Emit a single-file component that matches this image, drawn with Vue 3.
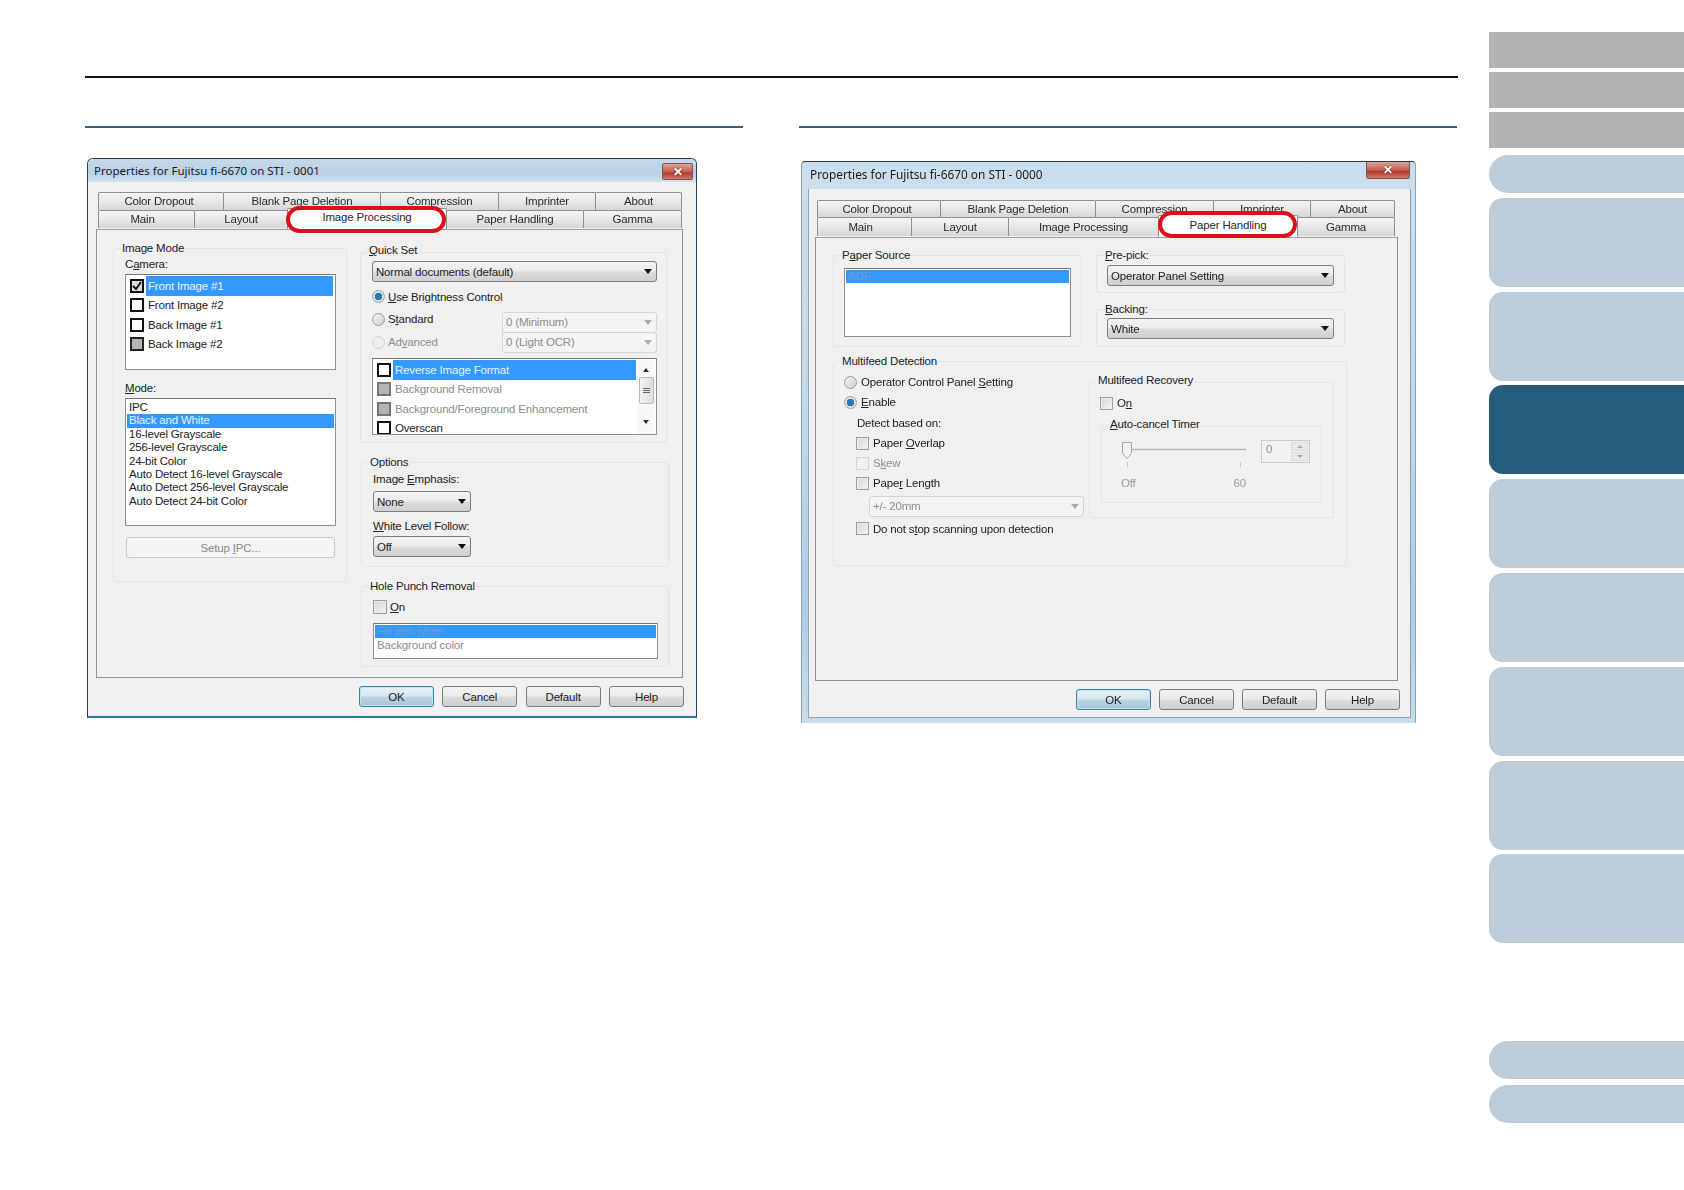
<script setup>
const tabs1a = [['Color Dropout',125],['Blank Page Deletion',157],['Compression',118],['Imprinter',97],['About',86]]
const tabs1b = [['Main',96],['Layout',93],['Image Processing',159,true],['Paper Handling',137],['Gamma',98]]
const tabs2a = [['Color Dropout',123],['Blank Page Deletion',155],['Compression',118],['Imprinter',97],['About',84]]
const tabs2b = [['Main',94],['Layout',97],['Image Processing',150],['Paper Handling',139,true],['Gamma',97]]
const cameras = [['Front Image #1','checked',true],['Front Image #2','',false],['Back Image #1','',false],['Back Image #2','gray',false]]
const modes = ['IPC','Black and White','16-level Grayscale','256-level Grayscale','24-bit Color','Auto Detect 16-level Grayscale','Auto Detect 256-level Grayscale','Auto Detect 24-bit Color']
const options = [['Reverse Image Format','',true,false],['Background Removal','gray',false,true],['Background/Foreground Enhancement','gray',false,true],['Overscan','',false,false]]
const nav = [['gray',36],['gray',36],['gray',36],['pill',38],['blue',89],['blue',89],['active',89],['blue',89],['blue',89],['blue',89],['blue',89],['blue',89],['pill far',38],['pill last',38]]
</script>

<template>
  <div class="page">
    <main class="content">
      <div class="rule"></div>
      <div class="columns">
        <section class="col">
          <div class="section-line"></div>
          <div class="dialog d1">
            <div class="titlebar">
              <span class="title">Properties for Fujitsu fi-6670 on STI - 0001</span>
              <span class="close">✕</span>
            </div>
            <div class="client">
              <div class="tabs">
                <div class="tabrow r1">
                  <div v-for="t in tabs1a" :key="t[0]" class="tab" :style="{ width: t[1] + 1 + 'px' }">{{ t[0] }}</div>
                </div>
                <div class="tabrow r2">
                  <div v-for="t in tabs1b" :key="t[0]" class="tab" :class="{ active: t[2] }" :style="{ width: t[1] + 1 + 'px' }">
                    <span v-if="t[2]" class="ellipse"></span>
                    <span class="tabtext">{{ t[0] }}</span>
                  </div>
                </div>
              </div>
              <div class="panel">
                <div class="split">
                  <div class="group image-mode">
                    <span class="legend">Image Mode</span>
                    <div class="label">C<u>a</u>mera:</div>
                    <div class="listbox camera">
                      <div v-for="c in cameras" :key="c[0]" class="checkrow">
                        <span class="bigcheck" :class="c[1]">
                          <svg v-if="c[1] === 'checked'" viewBox="0 0 10 10" width="10" height="10"><path d="M1 5l3 3 5-7" fill="none" stroke="#111" stroke-width="2"/></svg>
                        </span>
                        <span class="checktext" :class="{ sel: c[2] }">{{ c[0] }}</span>
                      </div>
                    </div>
                    <div class="label mode-label"><u>M</u>ode:</div>
                    <div class="listbox modes">
                      <div v-for="(m, i) in modes" :key="m" class="moderow" :class="{ sel: i === 1 }">{{ m }}</div>
                    </div>
                    <div class="btn disabled setup"><span>Setup <u>I</u>PC...</span></div>
                  </div>
                  <div class="rightcol">
                    <div class="group quick">
                      <span class="legend"><u>Q</u>uick Set</span>
                      <div class="combo wide"><span>Normal documents (default)</span><i class="arrow"></i></div>
                      <div class="quickgrid">
                        <div class="radioline span2"><span class="radio on"></span><span><u>U</u>se Brightness Control</span></div>
                        <div class="radioline std"><span class="radio"></span><span>S<u>t</u>andard</span></div>
                        <div class="combo off"><span>0 (Minimum)</span><i class="arrow"></i></div>
                        <div class="radioline adv dim"><span class="radio faint"></span><span>Ad<u>v</u>anced</span></div>
                        <div class="combo off"><span>0 (Light OCR)</span><i class="arrow"></i></div>
                      </div>
                      <div class="listbox optlist">
                        <div class="optrows">
                          <div v-for="o in options" :key="o[0]" class="checkrow">
                            <span class="bigcheck" :class="o[1]"></span>
                            <span class="checktext" :class="{ sel: o[2], dim: o[3] }">{{ o[0] }}</span>
                          </div>
                        </div>
                        <div class="scroll">
                          <i class="sb-up"></i>
                          <span class="thumb"><b></b><b></b><b></b></span>
                          <i class="sb-down"></i>
                        </div>
                      </div>
                    </div>
                    <div class="group options">
                      <span class="legend">Options</span>
                      <div class="label">Image <u>E</u>mphasis:</div>
                      <div class="combo small first"><span>None</span><i class="arrow"></i></div>
                      <div class="label wl"><u>W</u>hite Level Follow:</div>
                      <div class="combo small"><span>Off</span><i class="arrow"></i></div>
                    </div>
                    <div class="group punch">
                      <span class="legend">Hole Punch Removal</span>
                      <div class="checkline"><span class="check"></span><span><u>O</u>n</span></div>
                      <div class="listbox holes">
                        <div class="moderow sel faded">Fill with white</div>
                        <div class="moderow dim">Background color</div>
                      </div>
                    </div>
                  </div>
                </div>
              </div>
              <div class="footer">
                <div class="btn ok">OK</div>
                <div class="btn">Cancel</div>
                <div class="btn">Default</div>
                <div class="btn">Help</div>
              </div>
            </div>
          </div>
        </section>

        <section class="col">
          <div class="section-line"></div>
          <div class="dialog d2">
            <div class="titlebar">
              <span class="title">Properties for Fujitsu fi-6670 on STI - 0000</span>
              <span class="close">✕</span>
            </div>
            <div class="client">
              <div class="tabs">
                <div class="tabrow r1">
                  <div v-for="t in tabs2a" :key="t[0]" class="tab" :style="{ width: t[1] + 1 + 'px' }">{{ t[0] }}</div>
                </div>
                <div class="tabrow r2">
                  <div v-for="t in tabs2b" :key="t[0]" class="tab" :class="{ active: t[2] }" :style="{ width: t[1] + 1 + 'px' }">
                    <span v-if="t[2]" class="ellipse"></span>
                    <span class="tabtext">{{ t[0] }}</span>
                  </div>
                </div>
              </div>
              <div class="panel">
                <div class="toprow">
                  <div class="group source">
                    <span class="legend">P<u>a</u>per Source</span>
                    <div class="listbox sourcelist"><div class="moderow sel faded">ADF</div></div>
                  </div>
                  <div class="stack">
                    <div class="group picker">
                      <span class="legend"><u>P</u>re-pick:</span>
                      <div class="combo"><span>Operator Panel Setting</span><i class="arrow"></i></div>
                    </div>
                    <div class="group picker backing">
                      <span class="legend"><u>B</u>acking:</span>
                      <div class="combo"><span>White</span><i class="arrow"></i></div>
                    </div>
                  </div>
                </div>
                <div class="group multifeed">
                  <span class="legend">Multifeed Detection</span>
                  <div class="mf-left">
                    <div class="radioline mf"><span class="radio"></span><span>Operator Control Panel <u>S</u>etting</span></div>
                    <div class="radioline mf"><span class="radio on"></span><span><u>E</u>nable</span></div>
                    <div class="detect">Detect based on:</div>
                    <div class="checkline mfc"><span class="check"></span><span>Paper <u>O</u>verlap</span></div>
                    <div class="checkline mfc dim"><span class="check faint"></span><span>S<u>k</u>ew</span></div>
                    <div class="checkline mfc"><span class="check"></span><span>Pape<u>r</u> Length</span></div>
                    <div class="combo off length"><span>+/- 20mm</span><i class="arrow"></i></div>
                    <div class="checkline mfc last"><span class="check"></span><span>Do not s<u>t</u>op scanning upon detection</span></div>
                  </div>
                  <div class="group recovery">
                    <span class="legend">Multifeed Recovery</span>
                    <div class="checkline"><span class="check"></span><span>O<u>n</u></span></div>
                    <div class="group timer">
                      <span class="legend"><u>A</u>uto-cancel Timer</span>
                      <div class="slider">
                        <svg width="125" height="28" viewBox="0 0 125 28">
                          <line x1="6" y1="9.5" x2="125" y2="9.5" stroke="#b5b5b5" stroke-width="1.5"/>
                          <path d="M1.500 2.500h9v11l-4.500 5-4.500-5z" fill="#f2f2f2" stroke="#a5a5a5"/>
                          <line x1="6.500" y1="22" x2="6.500" y2="27" stroke="#c8c8c8"/>
                          <line x1="119.500" y1="22" x2="119.500" y2="27" stroke="#c8c8c8"/>
                        </svg>
                        <div class="ticks"><span>Off</span><span>60</span></div>
                      </div>
                      <div class="spin">
                        <span class="spinval">0</span>
                        <div class="spinbtns"><i class="sp-up"></i><i class="sp-down"></i></div>
                      </div>
                    </div>
                  </div>
                </div>
              </div>
              <div class="footer">
                <div class="btn ok">OK</div>
                <div class="btn">Cancel</div>
                <div class="btn">Default</div>
                <div class="btn">Help</div>
              </div>
            </div>
          </div>
        </section>
      </div>
    </main>
    <nav class="sidebar">
      <div v-for="(n, i) in nav" :key="i" class="navitem" :class="n[0]" :style="{ height: n[1] + 'px' }"></div>
    </nav>
  </div>
</template>

<style scoped>
.page { display: flex; width: 1684px; height: 1190px; background: #fff; overflow: hidden; font-family: "Liberation Sans", Arial, sans-serif; font-size: 11.5px; letter-spacing: -0.18px; line-height: 14px; color: #222; }
.content { width: 1373px; margin-left: 85px; padding-top: 76px; box-sizing: content-box; }
.rule { height: 2px; background: #111; }
.columns { display: flex; gap: 56px; margin-top: 48px; }
.col { width: 658px; }
.section-line { height: 2px; background: #3a6079; }

.sidebar { display: flex; flex-direction: column; width: 195px; margin-left: 31px; padding-top: 32px; }
.navitem { flex: none; margin-top: 4.8px; background: #bccdd9; border-radius: 14px 0 0 14px; }
.navitem.gray { background: #b2b2b2; border-radius: 0; margin-top: 4px; }
.navitem.gray:first-child { margin-top: 0; }
.navitem.pill { border-radius: 19px 0 0 19px; }
.navitem.pill:nth-child(4) { margin-top: 7px; }
.navitem.active { background: #265d7c; }
.navitem.far { margin-top: 97.4px; }
.navitem.last { margin-top: 6px; }

.dialog { box-sizing: border-box; margin-left: 2px; filter: blur(0.35px); background: #f0f0f0; }
.d1 { width: 610px; height: 560px; margin-top: 30px; border: 1px solid #25404f; border-bottom: 2px solid #2a7aa5; border-radius: 6px 6px 0 0; }
.d2 { width: 615px; height: 562px; margin-top: 33px; border-top: 1px solid #2f3c45; border-left: 1px solid #8ba3b5; border-right: 1px solid #8ba3b5; background: linear-gradient(180deg, #cbdeed, #c3d9ea 40%, #aecee5 80%, #c8dbe9); border-radius: 4px 4px 0 0; padding: 0 4px 5px 6px; }

.titlebar { display: flex; justify-content: space-between; align-items: flex-start; }
.d1 .titlebar { height: 23px; padding: 0 3px 0 6px; background: linear-gradient(180deg, #c5d9ea, #b9d1e6 65%, #d0e1ef); border-radius: 5px 5px 0 0; }
.d2 .titlebar { height: 27px; padding: 0 1px 0 2px; }
.title { font-family: "Noto Sans", "Open Sans", sans-serif; font-size: 11.5px; letter-spacing: 0; line-height: 24px; color: #1c1c1c; }
.d2 .title { font-size: 11.85px; line-height: 25px; }
.close { display: flex; align-items: center; justify-content: center; color: #fff; font-weight: bold; font-size: 12px; text-shadow: 0 0 2px #611; background: linear-gradient(180deg, #dca59c, #c75f52 50%, #b03b2e 60%, #cf7a6d); border: 1px solid #7d5550; border-top: 0; border-radius: 0 0 3px 3px; }
.d1 .close { width: 29px; height: 15px; margin-top: 4px; border-top: 1px solid #7d5550; border-radius: 2px; }
.d2 .close { width: 42px; height: 16px; }

.client { background: #f0f0f0; }
.d1 .client { height: 534px; padding-top: 10px; box-sizing: border-box; }
.d2 .client { height: 529px; padding-top: 11px; box-sizing: border-box; border-left: 1px solid #8ba3b5; border-right: 1px solid #8ba3b5; border-bottom: 1px solid #8ba3b5; }

.tabs { position: relative; z-index: 2; margin-left: 10px; }
.d2 .tabs { margin-left: 8px; }
.tabrow { display: flex; }
.tab { display: flex; align-items: center; justify-content: center; box-sizing: border-box; margin-right: -1px; flex: none; height: 18px; color: #2a2a2a; border: 1px solid #8c8f92; border-bottom: 0; border-radius: 2px 2px 0 0; background: linear-gradient(180deg, #f4f4f4, #e9e9e9 45%, #d6d6d6); position: relative; }
.d1 .tab { padding-bottom: 1px; }
.r2 .tab:first-child { padding-right: 8px; }
.r1 .tab:first-child { padding-right: 4px; }
.d2 .r1 .tab { height: 17px; }
.d2 .r2 .tab { height: 19px; }
.d1 .tab.active { height: 21px; margin-top: -2px; background: #fdfdfd; z-index: 3; padding-bottom: 4px; }
.d2 .r2 .tab.active { height: 22px; margin-top: -2px; background: #fdfdfd; z-index: 3; padding-bottom: 4px; }
.tabtext { position: relative; z-index: 2; }
.ellipse { position: absolute; left: -2px; top: -3px; width: 160px; height: 27px; box-sizing: border-box; border: 4px solid #dc101c; border-radius: 14px; background: #fff; z-index: 1; }
.d2 .ellipse { width: 139px; left: -1px; top: -5px; }

.panel { box-sizing: border-box; background: #f0f0f0; border: 1px solid #8c9196; border-top-color: #9a9da0; }
.d1 .panel { margin-left: 8px; width: 587px; height: 449px; padding: 18px 0 0 16px; }
.d2 .panel { margin-left: 6px; width: 583px; height: 444px; padding: 17px 0 0 17px; }

.footer { display: flex; justify-content: flex-end; gap: 8.4px; padding-right: 12px; margin-top: 8px; }
.d2 .footer { gap: 8px; padding-right: 10px; margin-top: 8px; }
.btn { box-sizing: border-box; width: 75px; height: 21px; display: flex; align-items: center; justify-content: center; border: 1px solid #7b7b7b; border-radius: 3px; background: linear-gradient(180deg, #f3f3f3, #ebebeb 48%, #dcdcdc 52%, #cfcfcf); color: #222; }
.btn.ok { border: 1px solid #3a7fae; box-shadow: inset 0 0 0 1px #bfe3f5; background: linear-gradient(180deg, #e6f0f7, #d6e6f1 48%, #bcd2e2 52%, #aac4d8); }
.btn.disabled { border-color: #c9c9c9; background: #f4f4f4; color: #8a8a8a; }

.group { position: relative; box-sizing: border-box; border: 1px solid #e1e3e5; border-radius: 3px; }
.legend { position: absolute; left: 7px; top: -8px; padding: 0 1px; background: #f0f0f0; white-space: nowrap; }
.label { height: 14px; white-space: nowrap; }

.split { display: flex; gap: 14px; }
.image-mode { width: 234px; height: 334px; padding: 8px 0 0 11px; }
.camera { height: 96px; width: 211px; margin-top: 3px; padding: 1px; }
.listbox { box-sizing: border-box; background: #fff; border: 1px solid #8a8f94; border-top-color: #74787c; overflow: hidden; }
.checkrow { display: flex; align-items: center; height: 19.5px; }
.bigcheck { flex: none; box-sizing: border-box; width: 14px; height: 14px; margin-left: 3px; border: 2px solid #111; background: #fff; display: flex; align-items: center; justify-content: center; }
.optlist .bigcheck { margin-left: 4px; }
.bigcheck.gray { background: #b4b4b4; border-color: #777; }
.bigcheck.checked { background: #ddd; }
.camera .bigcheck.gray { border-color: #222; }
.checktext { flex: 1; align-self: stretch; display: flex; align-items: center; padding-left: 2px; margin-left: 2px; margin-right: 1px; white-space: nowrap; }
.sel { background: #3399ff; color: #e8f2ff; }
.dim { color: #8d8d8d; }
.mode-label { margin-top: 11px; }
.modes { width: 211px; height: 128px; margin-top: 3px; padding: 2px 1px; }
.moderow { height: 13.4px; line-height: 13.4px; padding-left: 2px; white-space: nowrap; }
.setup { width: 209px; margin: 11px 0 0 1px; }

.rightcol { width: 308px; display: flex; flex-direction: column; }
.quick { width: 307px; height: 191px; margin: 4px 0 0 -1px; padding: 8px 0 0 11px; }
.quick .legend { top: -10px; }
.combo { display: flex; align-items: center; justify-content: space-between; box-sizing: border-box; height: 21px; padding: 0 4px 0 3px; border: 1px solid #7d7d7d; border-radius: 3px; background: linear-gradient(180deg, #f3f3f3, #ebebeb 48%, #dcdcdc 52%, #cfcfcf); white-space: nowrap; }
.combo.wide { width: 285px; }
.arrow { width: 0; height: 0; border-left: 4px solid transparent; border-right: 4px solid transparent; border-top: 5px solid #111; }
.combo.off { background: #f4f4f4; border-color: #d4d4d4; color: #8d8d8d; height: 20.5px; }
.combo.off .arrow { border-top-color: #a9a9a9; }
.quickgrid { display: grid; grid-template-columns: 130px 155px; grid-template-rows: 25px 20px 21px; margin-top: 5px; }
.span2 { grid-column: 1 / 3; height: 21px; margin: -1px 0 4px; }
.radioline { display: flex; align-items: center; gap: 3px; white-space: nowrap; }
.std { align-self: start; height: 14px; }
.adv { align-self: start; height: 14px; margin-top: 3px; }
.radio { flex: none; box-sizing: border-box; width: 13px; height: 13px; border-radius: 50%; border: 1px solid #9a9a9a; background: linear-gradient(135deg, #f2f2f2, #cfcfcf); }
.radio.on { background: radial-gradient(circle, #1f7fb8 0 3px, #0e5f90 3.4px, #e4e4e4 4px, #d0d0d0); border-color: #8aa; }
.radio.faint { border-color: #d0d0d0; background: #ececec; }
.optlist { display: flex; width: 285px; height: 77px; margin: 5px 0 0; padding-top: 1px; }
.optrows { flex: 1; }
.scroll { flex: none; width: 18px; display: flex; flex-direction: column; align-items: center; background: #f8f8f8; margin-right: 1px; }
.sb-up, .sb-down { width: 0; height: 0; border-left: 3.500px solid transparent; border-right: 3.500px solid transparent; }
.sb-up { border-bottom: 4px solid #333; margin-top: 8px; }
.thumb { box-sizing: border-box; width: 15px; height: 27px; margin-top: 5px; border: 1px solid #b8b8b8; border-radius: 2px; background: linear-gradient(90deg, #f3f3f3, #dcdcdc); display: flex; flex-direction: column; align-items: center; justify-content: center; gap: 1px; }
.thumb b { width: 7px; height: 1px; background: #666; }
.sb-down { border-top: 4px solid #333; margin-top: 16px; }

.options { height: 105px; margin-top: 19px; padding: 9px 0 0 11px; }
.combo.small { width: 98px; margin-top: 3px; }
.combo.first { margin-top: 5px; }
.wl { margin-top: 7px; }
.punch { height: 81px; margin-top: 19px; padding: 13px 0 0 11px; }
.checkline { display: flex; align-items: center; gap: 3px; height: 14px; white-space: nowrap; }
.check { flex: none; box-sizing: border-box; width: 14px; height: 14px; border: 1px solid #9d9d9d; background: linear-gradient(135deg, #d6d6d6, #f3f3f3); box-shadow: inset 0 0 0 1px #ececec; }
.check.faint { border-color: #d2d2d2; background: #efefef; box-shadow: none; }
.holes { width: 285px; height: 36px; margin-top: 9px; padding: 1px; }
.holes .moderow { height: 13px; }
.holes .dim { height: 14px; line-height: 14px; }
.faded { color: #6f9bd4; }

.toprow { display: flex; gap: 14px; }
.source { width: 249px; height: 92px; padding: 12px 0 0 10px; }
.sourcelist { width: 227px; height: 69px; padding: 1px; }
.sourcelist .moderow { height: 13px; }
.stack { width: 249px; display: flex; flex-direction: column; }
.picker { height: 38px; padding: 9px 0 0 10px; }
.picker .combo { width: 227px; }
.backing { margin-top: 16px; padding-top: 8px; }
.multifeed { display: flex; width: 514px; height: 205px; margin-top: 14px; }
.mf-left { width: 255px; padding-top: 10px; padding-left: 10px; box-sizing: border-box; }
.mf { height: 20px; gap: 4px; }
.detect { height: 20px; line-height: 20px; margin: 1px 0 0 13px; }
.mfc { height: 20px; margin-left: 12px; gap: 4px; }
.mfc .check { width: 13px; height: 13px; }
.length { width: 215px; margin: 3px 0 0 25px; height: 20px; }
.last { margin-top: 2px; }
.recovery { width: 245px; height: 136px; margin-top: 20px; padding: 13px 0 0 10px; }
.recovery .legend { top: -10px; }
.recovery > .checkline { gap: 4px; }
.recovery .check { width: 13px; height: 13px; }
.timer { display: flex; width: 221px; height: 77px; margin: 16px 0 0 1px; padding: 13px 0 0 19px; }
.slider { width: 125px; color: #9c9c9c; }
.slider svg { display: block; }
.ticks { display: flex; justify-content: space-between; margin-top: 8px; }
.spin { display: flex; box-sizing: border-box; width: 49px; height: 23px; margin-left: 15px; padding: 1px 1px 1px 4px; background: #f1f1f1; border: 1px solid #c9c9c9; color: #8d8d8d; justify-content: space-between; }
.spinbtns { display: flex; flex-direction: column; gap: 1px; width: 17px; }
.spinbtns i { flex: 1; display: flex; align-items: center; justify-content: center; background: #e8e8e8; border: 1px solid #dcdcdc; box-sizing: border-box; }
.sp-up::before, .sp-down::before { content: ""; border-left: 3px solid transparent; border-right: 3px solid transparent; }
.sp-up::before { border-bottom: 3px solid #aaa; }
.sp-down::before { border-top: 3px solid #aaa; }
u { text-underline-offset: 1px; }
</style>
